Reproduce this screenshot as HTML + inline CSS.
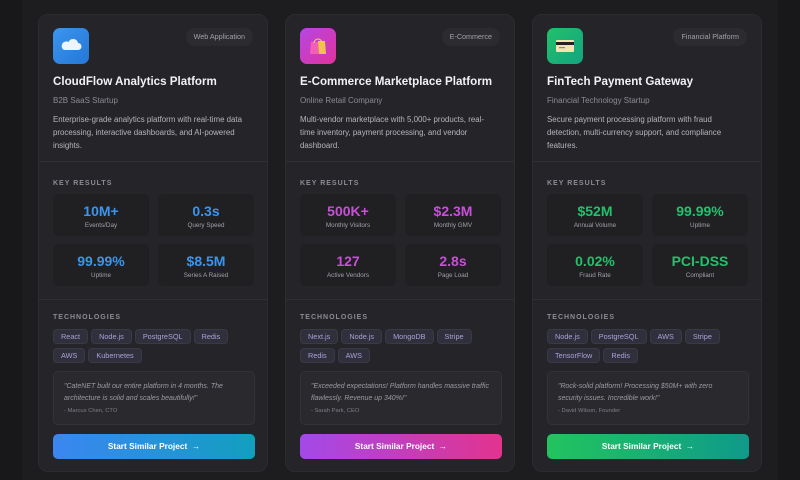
<!DOCTYPE html><html><head><style>
*{box-sizing:border-box;margin:0;padding:0}
body{width:800px;height:480px;background:#18181b;font-family:"Liberation Sans",sans-serif;overflow:hidden;position:relative}
.wrap{position:absolute;left:22px;top:0;width:756px;height:480px;background:#1d1d20}
.card{position:absolute;top:14px;width:230px;height:458px;background:#252529;border-radius:10px;border:1px solid #2c2c30}
.ic{position:absolute;left:14px;top:13px;width:36px;height:36px;border-radius:7px}
.badge{position:absolute;right:14px;top:13px;height:18px;padding:0 8px;border-radius:9px;background:#2c2c30;color:#a0a0a8;font-size:7.2px;line-height:18px}
.t{position:absolute;left:14px;top:60px;color:#f2f2f4;font-size:11.6px;font-weight:bold}
.s{position:absolute;left:14px;top:81px;color:#8b8b93;font-size:8px}
.d{position:absolute;left:14px;top:98px;width:215px;color:#b4b4bb;font-size:7.9px;line-height:13px;white-space:nowrap}
.hr{position:absolute;left:0;right:0;height:1px;background:#2f2f34}
.lab{position:absolute;left:14px;color:#8b8b93;font-size:7px;letter-spacing:1px;font-weight:bold}
.m{position:absolute;width:96px;height:42px;background:#202023;border-radius:5px;text-align:center}
.m b{display:block;font-size:14px;margin-top:9px}
.m span{display:block;font-size:6.3px;color:#a0a0a8;margin-top:3px}
.tags{position:absolute;left:14px;top:314px;width:205px;display:flex;flex-wrap:wrap;gap:4px 3px}
.tag{display:block;height:15px;line-height:13px;padding:0 7px;border-radius:4px;background:#302f3c;border:1px solid #3a3948;color:#a7a3d8;font-size:7.3px}
.q{position:absolute;left:14px;top:356px;width:202px;height:54px;background:#2a2a2e;border:1px solid #323237;border-radius:5px;padding:9px 10px}
.q i{display:block;color:#9a9aa2;font-size:7px;line-height:11.5px}
.q small{display:block;color:#7d7d85;font-size:5.8px;margin-top:4px}
.btn{position:absolute;left:14px;top:419px;width:202px;height:25px;border-radius:5px;color:#fff;font-size:8.3px;font-weight:bold;text-align:center;line-height:25px}
</style></head><body><div class="wrap"></div>

<div class="card" style="left:38px">
<div class="ic" style="background:linear-gradient(135deg,#3b95ee,#2577d6)"><svg width="36" height="36"><path d="M11 22h14a3.5 3.5 0 0 0 0-7 5 5 0 0 0-9.5-1A4 4 0 0 0 11 22z" fill="#eef4fb"/></svg></div>
<div class="badge">Web Application</div>
<div class="t">CloudFlow Analytics Platform</div><div class="s">B2B SaaS Startup</div>
<div class="d">Enterprise-grade analytics platform with real-time data<br>processing, interactive dashboards, and AI-powered<br>insights.</div>
<div class="hr" style="top:146px"></div>
<div class="lab" style="top:165px">KEY RESULTS</div>
<div class="m" style="left:14px;top:179px;color:#3b95ee"><b>10M+</b><span>Events/Day</span></div>
<div class="m" style="left:119px;top:179px;color:#3b95ee"><b>0.3s</b><span>Query Speed</span></div>
<div class="m" style="left:14px;top:229px;color:#3b95ee"><b>99.99%</b><span>Uptime</span></div>
<div class="m" style="left:119px;top:229px;color:#3b95ee"><b>$8.5M</b><span>Series A Raised</span></div>
<div class="hr" style="top:284px"></div>
<div class="lab" style="top:299px">TECHNOLOGIES</div>
<div class="tags"><span class="tag">React</span><span class="tag">Node.js</span><span class="tag">PostgreSQL</span><span class="tag">Redis</span><span class="tag">AWS</span><span class="tag">Kubernetes</span></div>
<div class="q"><i>"CateNET built our entire platform in 4 months. The architecture is solid and scales beautifully!"</i><small>- Marcus Chen, CTO</small></div>
<div class="btn" style="background:linear-gradient(90deg,#3b86f2,#129fbf)">Start Similar Project &nbsp;→</div>
</div>

<div class="card" style="left:285px">
<div class="ic" style="background:linear-gradient(135deg,#b546e6,#e1329a)"><svg width="36" height="36"><path d="M11 14h7l1 12h-9z" fill="#f35fb7"/><path d="M18 13h7l1 13h-7z" fill="#f1c34a"/><path d="M14 15a4 4 0 0 1 8 0" stroke="#f7d36b" fill="none"/></svg></div>
<div class="badge">E-Commerce</div>
<div class="t">E-Commerce Marketplace Platform</div><div class="s">Online Retail Company</div>
<div class="d">Multi-vendor marketplace with 5,000+ products, real-<br>time inventory, payment processing, and vendor<br>dashboard.</div>
<div class="hr" style="top:146px"></div>
<div class="lab" style="top:165px">KEY RESULTS</div>
<div class="m" style="left:14px;top:179px;color:#c84fd8"><b>500K+</b><span>Monthly Visitors</span></div>
<div class="m" style="left:119px;top:179px;color:#c84fd8"><b>$2.3M</b><span>Monthly GMV</span></div>
<div class="m" style="left:14px;top:229px;color:#c84fd8"><b>127</b><span>Active Vendors</span></div>
<div class="m" style="left:119px;top:229px;color:#c84fd8"><b>2.8s</b><span>Page Load</span></div>
<div class="hr" style="top:284px"></div>
<div class="lab" style="top:299px">TECHNOLOGIES</div>
<div class="tags"><span class="tag">Next.js</span><span class="tag">Node.js</span><span class="tag">MongoDB</span><span class="tag">Stripe</span><span class="tag">Redis</span><span class="tag">AWS</span></div>
<div class="q"><i>"Exceeded expectations! Platform handles massive traffic flawlessly. Revenue up 340%!"</i><small>- Sarah Park, CEO</small></div>
<div class="btn" style="background:linear-gradient(90deg,#a349e8,#e2338f)">Start Similar Project &nbsp;→</div>
</div>

<div class="card" style="left:532px">
<div class="ic" style="background:linear-gradient(135deg,#22c16b,#14a37f)"><svg width="36" height="36"><rect x="9" y="12" width="18" height="12" rx="1" fill="#f2e3b0"/><rect x="9" y="14" width="18" height="3" fill="#222"/><rect x="12" y="19" width="6" height="1.2" fill="#888"/></svg></div>
<div class="badge">Financial Platform</div>
<div class="t">FinTech Payment Gateway</div><div class="s">Financial Technology Startup</div>
<div class="d">Secure payment processing platform with fraud<br>detection, multi-currency support, and compliance<br>features.</div>
<div class="hr" style="top:146px"></div>
<div class="lab" style="top:165px">KEY RESULTS</div>
<div class="m" style="left:14px;top:179px;color:#22c16b"><b>$52M</b><span>Annual Volume</span></div>
<div class="m" style="left:119px;top:179px;color:#22c16b"><b>99.99%</b><span>Uptime</span></div>
<div class="m" style="left:14px;top:229px;color:#22c16b"><b>0.02%</b><span>Fraud Rate</span></div>
<div class="m" style="left:119px;top:229px;color:#22c16b"><b>PCI-DSS</b><span>Compliant</span></div>
<div class="hr" style="top:284px"></div>
<div class="lab" style="top:299px">TECHNOLOGIES</div>
<div class="tags"><span class="tag">Node.js</span><span class="tag">PostgreSQL</span><span class="tag">AWS</span><span class="tag">Stripe</span><span class="tag">TensorFlow</span><span class="tag">Redis</span></div>
<div class="q"><i>"Rock-solid platform! Processing $50M+ with zero security issues. Incredible work!"</i><small>- David Wilson, Founder</small></div>
<div class="btn" style="background:linear-gradient(90deg,#22c45e,#0f9a8a)">Start Similar Project &nbsp;→</div>
</div>
</body></html>
